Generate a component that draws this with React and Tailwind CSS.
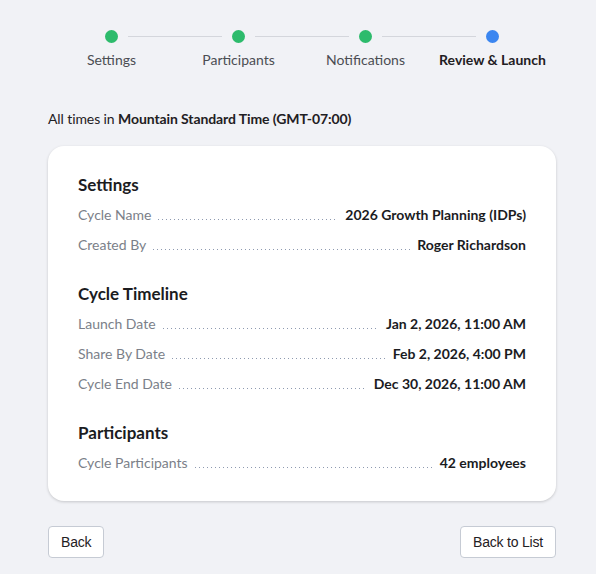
import React from "react";

const steps = [
  { label: "Settings", done: true },
  { label: "Participants", done: true },
  { label: "Notifications", done: true },
  { label: "Review & Launch", done: false },
];

const sections = [
  {
    title: "Settings",
    rows: [
      ["Cycle Name", "2026 Growth Planning (IDPs)"],
      ["Created By", "Roger Richardson"],
    ],
  },
  {
    title: "Cycle Timeline",
    rows: [
      ["Launch Date", "Jan 2, 2026, 11:00 AM"],
      ["Share By Date", "Feb 2, 2026, 4:00 PM"],
      ["Cycle End Date", "Dec 30, 2026, 11:00 AM"],
    ],
  },
  {
    title: "Participants",
    rows: [["Cycle Participants", "42 employees"]],
  },
];

export default function App() {
  return (
    <div className="h-[574px] w-[596px] overflow-hidden bg-[#f1f2f6] pt-[30px] font-['Lato','Open_Sans',sans-serif] text-[#1f2023]">
      <div className="ml-[48px] w-[508px]">
        {/* Stepper */}
        <div className="flex items-center px-[57px]">
          {steps.map((s, i) => (
            <React.Fragment key={s.label}>
              <div
                className={
                  "h-[13px] w-[13px] shrink-0 rounded-full " +
                  (s.done ? "bg-[#2dbb6c]" : "bg-[#3b86f0]")
                }
              />
              {i < steps.length - 1 && (
                <div className="mx-[10px] h-px flex-1 bg-[#d4d6dc]" />
              )}
            </React.Fragment>
          ))}
        </div>
        <div className="mt-[7px] grid grid-cols-4 text-center text-[14px] leading-[20px]">
          {steps.map((s) => (
            <div
              key={s.label}
              className={s.done ? "text-[#4b4d53]" : "font-bold text-[#1f2023]"}
            >
              {s.label}
            </div>
          ))}
        </div>

        <div className="mt-[39px] text-[14px] leading-[20px] tracking-[-0.1px] text-[#1f2023]">
          All times in <span className="font-bold">Mountain Standard Time (GMT-07:00)</span>
        </div>

        {/* Card */}
        <div className="mt-[17px] rounded-[16px] bg-white px-[30px] pb-[24px] pt-[27px] shadow-[0_1px_3px_rgba(0,0,0,0.18)]">
          {sections.map((sec, si) => (
            <div key={sec.title} className={si > 0 ? "mt-[23px]" : ""}>
              <div className="mb-[2px] text-[17px] font-bold leading-[24px] text-[#1b1c1f]">
                {sec.title}
              </div>
              {sec.rows.map(([k, v]) => (
                <div key={k} className="flex h-[30px] items-center text-[14px]">
                  <span className="text-[#7b7f89]">{k}</span>
                  <span className="mx-[7px] mt-[11px] h-px flex-1 bg-[linear-gradient(to_right,#8e9ab0_1px,transparent_1px)] bg-[length:4px_1px] bg-repeat-x" />
                  <span className="font-bold text-[#1b1c1f]">{v}</span>
                </div>
              ))}
            </div>
          ))}
        </div>

        {/* Buttons */}
        <div className="mt-[25px] flex justify-between font-['Liberation_Sans',Arial,sans-serif] text-[14px] tracking-[-0.2px]">
          <button className="h-[32px] rounded-[4px] border border-[#c6cbd4] bg-white px-[12px] text-[#1f2023]">
            Back
          </button>
          <button className="h-[32px] rounded-[4px] border border-[#c6cbd4] bg-white px-[12px] text-[#1f2023]">
            Back to List
          </button>
        </div>
      </div>
    </div>
  );
}
